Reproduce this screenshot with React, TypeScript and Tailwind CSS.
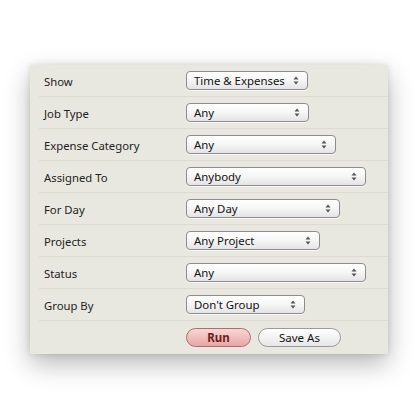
import React from 'react';

const rows = [
  { label: 'Show', value: 'Time & Expenses', width: 122 },
  { label: 'Job Type', value: 'Any', width: 123 },
  { label: 'Expense Category', value: 'Any', width: 150 },
  { label: 'Assigned To', value: 'Anybody', width: 180 },
  { label: 'For Day', value: 'Any Day', width: 154 },
  { label: 'Projects', value: 'Any Project', width: 134 },
  { label: 'Status', value: 'Any', width: 180 },
  { label: 'Group By', value: "Don't Group", width: 119 },
];

const Arrows = () => (
  <svg width="6" height="9" viewBox="0 0 6 9" className="shrink-0">
    <path d="M3 0.5 L5.5 3.5 L0.5 3.5 Z" fill="#555" />
    <path d="M3 8.5 L5.5 5.5 L0.5 5.5 Z" fill="#555" />
  </svg>
);

const Select = ({ value, width }: { value: string; width: number }) => (
  <div
    className="flex h-[19px] items-center justify-between rounded-[4px] border border-[#8c8c8c] bg-gradient-to-b from-white via-[#f6f6f6] to-[#e4e4e4] pl-[7px] pr-[8px] shadow-[0_1px_0_rgba(255,255,255,0.7)]"
    style={{ width }}
  >
    <span className="whitespace-nowrap pt-[1px] text-[11.4px] leading-none text-[#111]">{value}</span>
    <Arrows />
  </div>
);

export default function App() {
  return (
    <div className="min-h-[420px] bg-white pl-[30px] pt-[65px] font-['Noto_Sans',sans-serif]">
      <div className="w-[358px] bg-[#e9e8e0] shadow-[0_10px_24px_rgba(0,0,0,0.28),0_0_6px_rgba(0,0,0,0.12)]">
        {rows.map((row, i) => (
          <div key={i} className="ml-[9px] flex h-[32px] items-center border-b border-[#dcdbd2]">
            <div className="w-[147px] whitespace-nowrap pl-[5px] pt-[2px] text-[11.3px] leading-none text-[#222]">{row.label}</div>
            <Select value={row.value} width={row.width} />
          </div>
        ))}
        <div className="ml-[156px] flex h-[33px] items-center gap-[7px] pb-[1px]">
          <button className="flex h-[19px] w-[65px] items-center justify-center rounded-full border border-[#b46a6a] bg-gradient-to-b from-[#f7d6d6] to-[#e8a6a6] pt-[1px] text-[11.5px] font-bold leading-none text-[#6e1c1c]">
            Run
          </button>
          <button className="flex h-[19px] w-[83px] items-center justify-center rounded-full border border-[#9a9a9a] bg-gradient-to-b from-white to-[#e6e6e6] pt-[1px] text-[11.5px] leading-none text-[#111]">
            Save As
          </button>
        </div>
      </div>
    </div>
  );
}
